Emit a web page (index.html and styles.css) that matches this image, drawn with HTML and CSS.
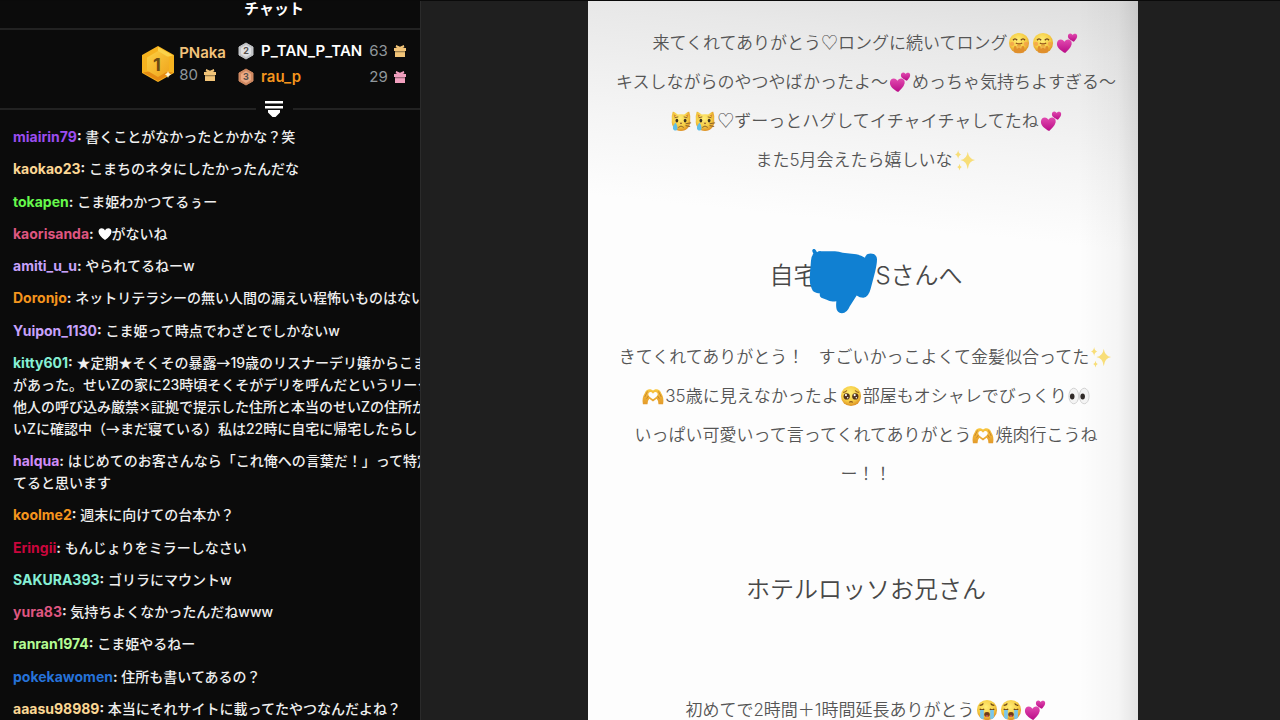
FILE: index.html
```html
<!DOCTYPE html>
<html lang="ja">
<head>
<meta charset="utf-8">
<title>チャット</title>
<link rel="stylesheet" href="styles.css">
</head>
<body>
<svg class="sprite" aria-hidden="true">
  <defs>
    <linearGradient id="gold" x1="0" y1="0" x2="1" y2="1"><stop offset="0" stop-color="#fbd044"/><stop offset="1" stop-color="#f0a41c"/></linearGradient>
    <radialGradient id="face" cx=".45" cy=".35" r=".65"><stop offset="0" stop-color="#ffee78"/><stop offset=".65" stop-color="#f5cb42"/><stop offset="1" stop-color="#dc8f25"/></radialGradient>
    <linearGradient id="pink" x1="0" y1="0" x2="0" y2="1"><stop offset="0" stop-color="#e24bb0"/><stop offset="1" stop-color="#b90b86"/></linearGradient>
    <linearGradient id="hand" x1="0" y1="0" x2="0" y2="1"><stop offset="0" stop-color="#f8c63e"/><stop offset="1" stop-color="#e39a2b"/></linearGradient>
  </defs>
  <symbol id="gift" viewBox="0 0 12 12">
    <path d="M2.2 0 6 1.8 9.8 0 10.4 2.2 8.5 3h-5L1.6 2.2z"/><path d="M0 3h12v3H0zM1 6h10v6H1z"/><path d="M1 6h10v1.300H1z" fill="#000" opacity=".35"/>
  </symbol>
  <symbol id="hearts" viewBox="0 0 24 24">
    <path fill="url(#pink)" d="M10 23C5 20 1 17 1 12.7c0-3 2-4.6 4.2-4.6 2 0 3.2 1 4 2.6.8-1.7 2.7-2.9 4.8-2.4 2.5.6 3.6 2.9 3 5.4C16 17.500 13 20 10 23z"/>
    <path fill="url(#pink)" d="M19.500 10.500C16 9 13 7.300 13 4.600 13 2.700 14.300 1.600 15.700 1.700c1.200.1 1.900.8 2.300 1.700.7-1.200 2-1.900 3.400-1.400 1.500.6 2 2.100 1.500 3.600-.6 1.900-2 3.300-3.400 4.900z"/>
  </symbol>
  <symbol id="giggle" viewBox="0 0 24 24">
    <circle cx="12" cy="12" r="11" fill="url(#face)"/>
    <path d="M5.500 9q2-3 4.500 0M14 9q2.500-3 4.500 0" fill="none" stroke="#70451a" stroke-width="1.500"/>
    <path d="M8.500 12q3.500 2 7 0" fill="none" stroke="#8a4a18" stroke-width="1.200"/>
    <circle cx="4.500" cy="13" r="2.300" fill="#f39a4a" opacity=".7"/><circle cx="19.500" cy="13" r="2.300" fill="#f39a4a" opacity=".7"/>
    <path d="M6.500 22c-1-4 0-6.500 1-7l2 1 1-2 1.500-.5 1.500.5 1 2 2-1c1.500 1 2 3 1 7-3 1.600-8 1.600-11 0z" fill="#e08f2c"/>
    <path d="M10 18v-3M12 17.500V14.500M14 18v-3" stroke="#f9cb5a" stroke-width="1.200"/>
  </symbol>
  <symbol id="cat" viewBox="0 0 24 24">
    <path fill="url(#face)" d="M3 2q1-1 5.500 3 3.500-1 7 0Q20 1 21 2q1.500 4 1 9c1 7-4 12-10 12S1 18 2 11Q1.500 6 3 2z"/>
    <path d="M4 4.500 4.500 8 7 6zM20 4.500 19.500 8 17 6z" fill="#d98b35"/>
    <ellipse cx="7.500" cy="11.500" rx="1.500" ry="2" fill="#3c3222"/><ellipse cx="16.500" cy="11.500" rx="1.500" ry="2" fill="#3c3222"/>
    <path d="m10.500 14 1.500 1.500 1.500-1.500z" fill="#7c4028"/><path d="M9 19q3-3 6 0M5 8.500 9 7.500M19 8.500 15 7.500M17 15l6-1M17 17l5 1" fill="none" stroke="#825a26"/>
    <path d="M6 13.500q-5 6-1.500 8.500c4 1.500 5-3 1.500-8.500z" fill="#61bfe8"/>
  </symbol>
  <symbol id="sparkles" viewBox="0 0 24 24">
    <path fill="#f8de78" d="M15 3q1 8 8 9-7 1-8 10-1-9-8-10 7-1 8-9zM4.500 1q.5 4 3.500 5-3 .8-3.500 5Q4 6.800 1 6q3-1 3.500-5zM6 16q.3 3 2.500 3.500Q6.300 20 6 23.500 5.700 20 3.500 19.500 5.700 19 6 16z"/>
  </symbol>
  <symbol id="handheart" viewBox="0 0 24 24">
    <path fill="url(#hand)" fill-rule="evenodd" d="M1 21c-1-5 0-9 2-12 1-3 4-5 7-4l2 1 2-1c3-1 6 1 7 4 2 3 3 7 2 12h-5q0-4-2-6l-4 3-4-3q-2 2-2 6zM12 15.500c5-3 6-5 4.500-7-1.500-1.500-3.500-.5-4.500 1-1-1.500-3-2.500-4.500-1C6 10.500 7 12.500 12 15.500z"/>
    <path d="M3 13 6 7M21 13 18 7M5 15l2-3M19 15l-2-3" stroke="#bd762b" fill="none" stroke-width=".8"/>
  </symbol>
  <symbol id="plead" viewBox="0 0 24 24">
    <circle cx="12" cy="12" r="11" fill="url(#face)"/>
    <circle cx="7.300" cy="12.500" r="3.400" fill="#51331c"/><circle cx="16.700" cy="12.500" r="3.400" fill="#51331c"/>
    <circle cx="6.500" cy="11" r="1.200" fill="#fff"/><circle cx="16" cy="11" r="1.200" fill="#fff"/><circle cx="8.400" cy="14" r=".8" fill="#fff"/><circle cx="17.800" cy="14" r=".8" fill="#fff"/>
    <path d="M10 19q2-1.800 4 0M3.500 8q2.500 0 4-2M20.500 8q-2.500 0-4-2" fill="none" stroke="#8a541c" stroke-width="1.200"/>
  </symbol>
  <symbol id="eyes" viewBox="0 0 24 24">
    <ellipse cx="6.300" cy="12" rx="5.300" ry="8.500" fill="#f4f4f4" stroke="#cfcfcf"/><ellipse cx="17.700" cy="12" rx="5.300" ry="8.500" fill="#f4f4f4" stroke="#cfcfcf"/>
    <ellipse cx="4.600" cy="12.500" rx="2.500" ry="3.200" fill="#302a28"/><ellipse cx="16" cy="12.500" rx="2.500" ry="3.200" fill="#302a28"/>
  </symbol>
  <symbol id="sob" viewBox="0 0 24 24">
    <circle cx="12" cy="12" r="11" fill="url(#face)"/>
    <path d="M4 11q2.500 2 5 0M15 11q2.500 2 5 0M4 7q3 0 4-2M20 7q-3 0-4-2" fill="none" stroke="#6c4518" stroke-width="1.400"/>
    <path d="M4.500 12h4v9.500q-2 1-4-1zM15.500 12h4v8.500q-2 2-4 1z" fill="#79c6ec"/>
    <ellipse cx="12" cy="17" rx="3" ry="2.700" fill="#6f3a18"/><path d="M10 18.500q2-1.500 4 0-2 2.300-4 0z" fill="#e26161"/>
  </symbol>
</svg>

<div class="app">
  <aside class="sidebar">
    <div class="chat">
      <h1 class="chat-title">チャット</h1>
      <section class="leaders" aria-label="ランキング">
        <div class="first">
          <svg class="medal-lg" viewBox="0 0 32 36" role="img" aria-label="1">
            <path d="M16 1 31 9.500v17L16 35 1 26.500v-17z" fill="#f6b31f" stroke="#f6b31f" stroke-width="2" stroke-linejoin="round"/>
            <path d="M16 1 31 9.500 16 13z" fill="#fbd34a"/><path d="M1 26.500 16 35l15-8.500L16 24z" fill="#e58c14"/>
            <path d="M16 5 27 11.500v13L16 31 5 24.500v-13z" fill="url(#gold)"/>
            <text x="15" y="25" text-anchor="middle" class="medal-n">1</text>
            <path d="M26 25q.5 3 3 3.500-2.500.5-3 3.500-.5-3-3-3.500 2.500-.5 3-3.500z" fill="#fff6cf"/>
          </svg>
          <div class="first-info">
            <span class="name c-peach">PNaka</span>
            <span class="count">80 <svg class="gift g-gold"><use href="#gift"/></svg></span>
          </div>
        </div>
        <div class="others">
          <svg class="medal-sm" viewBox="0 0 16 18" role="img" aria-label="2"><path d="M8 1 15 5v8l-7 4-7-4V5z" fill="#c3c5c8" stroke="#c3c5c8" stroke-linejoin="round"/><path d="M8 3 13 6v6l-5 3-5-3V6z" fill="#dfe0e2"/><text x="8" y="12" text-anchor="middle" class="medal-s">2</text></svg>
          <span class="name c-white">P_TAN_P_TAN</span>
          <span class="count">63 <svg class="gift g-gold"><use href="#gift"/></svg></span>
          <svg class="medal-sm" viewBox="0 0 16 18" role="img" aria-label="3"><path d="M8 1 15 5v8l-7 4-7-4V5z" fill="#d18a62" stroke="#d18a62" stroke-linejoin="round"/><path d="M8 3 13 6v6l-5 3-5-3V6z" fill="#eba983"/><text x="8" y="12" text-anchor="middle" class="medal-s">3</text></svg>
          <span class="name c-orange">rau_p</span>
          <span class="count">29 <svg class="gift g-pink"><use href="#gift"/></svg></span>
        </div>
      </section>
      <div class="divider">
        <button class="toggle" type="button" aria-label="ランキングを開く"><svg viewBox="0 0 18 16"><path d="M0 0h18v2.500H0zM0 5h18v2.500H0zM3 9h12v2.500L10.500 16h-3L3 11.500z" fill="#fff"/></svg></button>
      </div>
      <ul class="messages">
        <li><b class="c-purple">miairin79</b><b>:</b> 書くことがなかったとかかな？笑</li>
        <li><b class="c-cream">kaokao23</b><b>:</b> こまちのネタにしたかったんだな</li>
        <li><b class="c-green">tokapen</b><b>:</b> こま姫わかつてるぅー</li>
        <li><b class="c-rose">kaorisanda</b><b>:</b> <svg class="heart" viewBox="0 0 14 14" role="img" aria-label="ハート"><path d="M7 13C3 10 .5 7.500.5 4.700c0-4 5-4.500 6.500-1.200C8.500.2 13.500.7 13.500 4.700 13.500 7.500 11 10 7 13z" fill="#fff"/></svg>がないね</li>
        <li><b class="c-lilac">amiti_u_u</b><b>:</b> やられてるねーw</li>
        <li><b class="c-orange">Doronjo</b><b>:</b> ネットリテラシーの無い人間の漏えい程怖いものはない</li>
        <li><b class="c-lilac">Yuipon_1130</b><b>:</b> こま姫って時点でわざとでしかないw</li>
        <li><b class="c-mint">kitty601</b><b>:</b> <span class="wide">★</span>定期<span class="wide">★</span>そくその暴露<span class="wide">→</span>19歳のリスナーデリ嬢からこま<br>があった。せいZの家に23時頃そくそがデリを呼んだというリーク<br>他人の呼び込み厳禁<span class="wide">✕</span>証拠で提示した住所と本当のせいZの住所が<br>いZに確認中（<span class="wide">→</span>まだ寝ている）私は22時に自宅に帰宅したらし</li>
        <li><b class="c-violet">halqua</b><b>:</b> はじめてのお客さんなら「これ俺への言葉だ！」って特定<br>てると思います</li>
        <li><b class="c-orange">koolme2</b><b>:</b> 週末に向けての台本か？</li>
        <li><b class="c-red">Eringii</b><b>:</b> もんじょりをミラーしなさい</li>
        <li><b class="c-mint">SAKURA393</b><b>:</b> ゴリラにマウントw</li>
        <li><b class="c-rose">yura83</b><b>:</b> 気持ちよくなかったんだねwww</li>
        <li><b class="c-lime">ranran1974</b><b>:</b> こま姫やるねー</li>
        <li><b class="c-blue">pokekawomen</b><b>:</b> 住所も書いてあるの？</li>
        <li><b class="c-cream">aaasu98989</b><b>:</b> 本当にそれサイトに載ってたやつなんだよね？</li>
      </ul>
    </div>
  </aside>

  <main class="viewer">
    <article class="note">
      <p>来てくれてありがとう<span class="wide">♡</span>ロングに続いてロング<svg class="emoji"><use href="#giggle"/></svg><svg class="emoji"><use href="#giggle"/></svg><svg class="emoji"><use href="#hearts"/></svg><br>キスしながらのやつやばかったよ〜<svg class="emoji"><use href="#hearts"/></svg>めっちゃ気持ちよすぎる〜<br><svg class="emoji"><use href="#cat"/></svg><svg class="emoji"><use href="#cat"/></svg><span class="wide">♡</span>ずーっとハグしてイチャイチャしてたね<svg class="emoji"><use href="#hearts"/></svg><br>また5月会えたら嬉しいな<svg class="emoji"><use href="#sparkles"/></svg></p>
      <h2>自宅<span class="redacted"><svg class="scribble" viewBox="210 50 210 200" aria-hidden="true"><path fill="#1080d2" d="M220 62C218 54 229 53 231 60L234 65Q240 61 246 62L288 62Q300 62 311 67L352 71Q368 74 378 82C380 64 414 65 414 86Q414 100 408 125L395 175Q389 200 373 202Q362 202 353 195L332 228Q324 248 309 248C292 247 290 232 292 212Q275 216 263 208L247 202Q240 197 243 189Q222 188 218 174Q211 160 212 140L216 90Q217 77 223 70Z"/></svg></span>Sさんへ</h2>
      <p>きてくれてありがとう！&nbsp;&nbsp; すごいかっこよくて金髪似合ってた<svg class="emoji"><use href="#sparkles"/></svg><br><svg class="emoji"><use href="#handheart"/></svg>35歳に見えなかったよ<svg class="emoji"><use href="#plead"/></svg>部屋もオシャレでびっくり<svg class="emoji"><use href="#eyes"/></svg><br>いっぱい可愛いって言ってくれてありがとう<svg class="emoji"><use href="#handheart"/></svg>焼肉行こうね<br>ー！！</p>
      <h2>ホテルロッソお兄さん</h2>
      <p class="spaced">初めてで2時間＋1時間延長ありがとう<svg class="emoji"><use href="#sob"/></svg><svg class="emoji"><use href="#sob"/></svg><svg class="emoji"><use href="#hearts"/></svg></p>
    </article>
  </main>
</div>
</body>
</html>
```
FILE: styles.css
```css
* { box-sizing: border-box; }
body { margin: 0; background: #1f1f1f; font-family: Inter, "Noto Sans CJK JP", sans-serif; }
.sprite { position: absolute; width: 0; height: 0; }
.app { display: flex; height: 100vh; overflow: hidden; border-top: 1px solid #0a0a0a; }

/* Chat column: its content is wider than the part left visible by the viewer */
.sidebar { flex: 0 0 421px; overflow: hidden; background: #0b0b0b; border-right: 1px solid #2b2b2b; }
.chat { display: flex; flex-direction: column; width: 548px; height: 100%; color: #efefef; }
.chat-title { margin: 0; padding-bottom: 10px; height: 29px; display: flex; align-items: flex-end; justify-content: center; border-bottom: 2px solid #222; font-size: 15px; line-height: 18px; font-weight: 700; color: #fff; }

.leaders { display: flex; justify-content: center; gap: 12px; padding-top: 8px; height: 68px; font-size: 15px; line-height: 22px; }
.first { display: flex; align-items: center; gap: 5px; height: 52px; }
.first-info { display: flex; flex-direction: column; }
.medal-lg { width: 32px; height: 36px; }
.medal-n { font: 700 18px Inter, sans-serif; fill: #6b4a12; }
.medal-sm { width: 16px; height: 18px; }
.medal-s { font: 700 9px Inter, sans-serif; fill: #55504d; }
.name { font-weight: 600; }
.count { display: flex; align-items: center; gap: 6px; color: #90979c; }
.gift { width: 12px; height: 12px; }
.g-gold { fill: #f2c478; }
.g-pink { fill: #f2a0bf; }
.others { display: grid; grid-template-columns: 16px auto auto; column-gap: 7px; align-items: center; height: 52px; }

.divider { display: flex; align-items: center; height: 22px; }
.divider::before, .divider::after { content: ""; flex: 1; height: 2px; background: #222; }
.toggle { display: flex; justify-content: center; width: 37px; padding: 0; border: 0; background: none; }
.toggle svg { width: 18px; height: 16px; }

.messages { flex: 1; display: flex; flex-direction: column; justify-content: space-between; margin: 0; padding: 6px 13px 0; list-style: none; font-size: 14px; line-height: 22px; font-weight: 500; white-space: nowrap; }
.messages b { font-weight: 700; }
.wide { font-family: "Noto Sans CJK JP", sans-serif; line-height: 1; }
.heart { width: 14px; height: 14px; vertical-align: -2px; }

.c-peach { color: #f1c27b; }
.c-white { color: #fff; }
.c-orange { color: #f5951d; }
.c-purple { color: #9b4df0; }
.c-cream { color: #fbd794; }
.c-green { color: #66f94c; }
.c-rose { color: #df5680; }
.c-lilac { color: #c7a2fb; }
.c-violet { color: #d08bf7; }
.c-mint { color: #86f0d5; }
.c-red { color: #c9063c; }
.c-lime { color: #b3fc93; }
.c-blue { color: #2672d8; }

.viewer { flex: 1; min-width: 0; padding-left: 167px; overflow: hidden; }
.note {
  width: 80%; max-width: 550px; min-height: 100%; padding: 23px 0 22px 6px; text-align: center; color: #555;
  background:
    linear-gradient(to left, rgba(0, 0, 0, .1), rgba(0, 0, 0, .03) 20px, transparent 60px),
    linear-gradient(174deg, #fdfdfd calc(100% - 250px), #f5f5f5 calc(100% - 170px), #e8e8e8 calc(100% - 60px), #dedede);
  background:
    linear-gradient(to left, rgba(0, 0, 0, .1), rgba(0, 0, 0, .03) 20px, transparent 60px),
    linear-gradient(186deg, #dedede, #e8e8e8 60px, #f5f5f5 170px, #fdfdfd 250px);
  font-family: Inter, "Noto Sans CJK JP", sans-serif; font-weight: 350; white-space: nowrap;
}
.note p { margin: 0; font-size: 17px; line-height: 39px; }
.note h2 { margin: 78px 0 44px; font-size: 24px; line-height: 36px; font-weight: 350; color: #484848; }
.note .spaced { padding-top: 39px; }
.emoji { width: 22px; height: 22px; margin: 0 1px; vertical-align: -5px; }
.redacted { display: inline-block; position: relative; width: 58px; height: 24px; vertical-align: middle; }
.scribble { position: absolute; left: -8px; top: -18px; width: 70px; height: 67px; }
```
